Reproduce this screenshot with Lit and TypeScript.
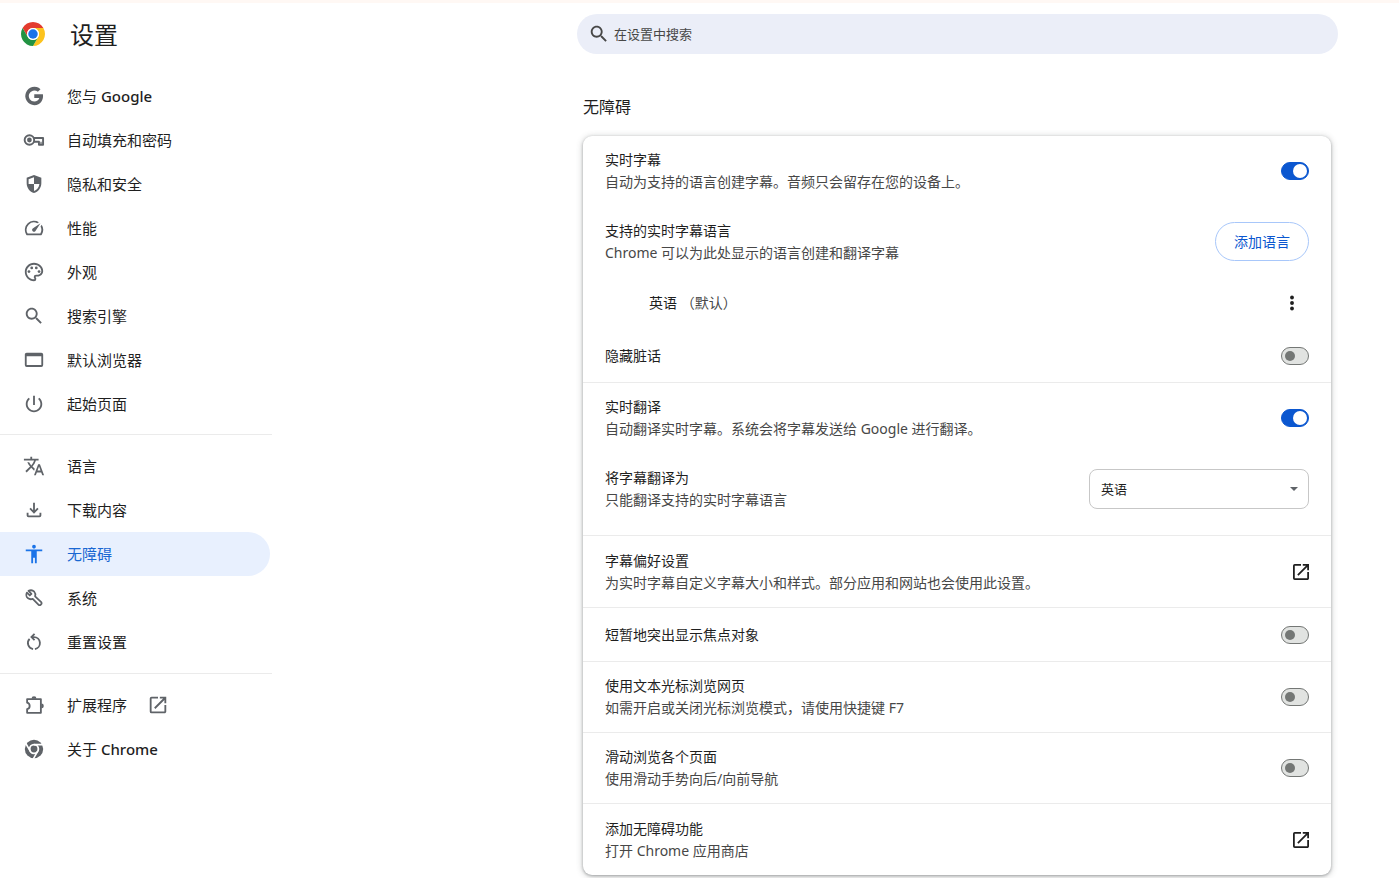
import { LitElement, html, css, svg, nothing } from "lit";
import type { TemplateResult } from "lit";
import { customElement, property, state } from "lit/decorators.js";
import { classMap } from "lit/directives/class-map.js";

const icon = (body: TemplateResult, viewBox = "0 0 24 24") =>
  html`<svg class="icon" viewBox=${viewBox} aria-hidden="true">${body}</svg>`;

const openPath = svg`<path d="M19 19H5V5h7V3H5a2 2 0 0 0-2 2v14a2 2 0 0 0 2 2h14c1.1 0 2-.9 2-2v-7h-2v7zM14 3v2h3.59l-9.83 9.83 1.41 1.41L19 6.41V10h2V3h-7z"/>`;
const searchPath = svg`<path d="M15.5 14h-.79l-.28-.27C15.41 12.59 16 11.11 16 9.5 16 5.91 13.09 3 9.5 3S3 5.91 3 9.5 5.91 16 9.5 16c1.61 0 3.09-.59 4.23-1.57l.27.28v.79l5 4.99L20.49 19l-4.99-5zm-6 0C7.01 14 5 11.99 5 9.5S7.01 5 9.5 5 14 7.01 14 9.5 11.99 14 9.5 14z"/>`;

const icons: Record<string, TemplateResult> = {
  google: icon(svg`<path d="M12.3 10.2v3.9h5.5c-.7 2.3-2.7 3.9-5.5 3.9a6 6 0 1 1 3.9-10.600l2.900-2.900A10 10 0 1 0 12.300 22c8.400 0 10.200-7.800 9.400-11.800z"/>`),
  key: icon(svg`<circle cx="7" cy="12" r="5.200" fill="none" stroke="currentColor" stroke-width="2.100"/><circle cx="7" cy="12" r="2.600"/><path d="M11.600 9.900H21.900V17.100H17.400V13.900H12" fill="none" stroke="currentColor" stroke-width="2.100" stroke-linejoin="round"/><path d="M19 14h1.300v2.500H19z"/>`),
  shield: icon(svg`<path d="M12 2.300L4 5.300v5.900c0 4.900 3.410 9.500 8 10.600 4.590-1.100 8-5.700 8-10.600V5.300zM12 12h5.900c-.5 3.700-2.800 6.700-5.900 7.700V12H6.100V6.800L12 4.500z"/>`),
  speed: icon(svg`<path d="M20.380 8.570l-1.230 1.850a8 8 0 0 1-.22 7.580H5.070A8 8 0 0 1 15.580 6.850l1.850-1.230A10 10 0 0 0 3.350 19a2 2 0 0 0 1.720 1h13.850a2 2 0 0 0 1.740-1 10 10 0 0 0-.27-10.440zm-9.790 6.840a2 2 0 0 0 2.830 0l5.660-8.490-8.490 5.660a2 2 0 0 0 0 2.830z"/>`),
  palette: icon(svg`<path d="M12 22C6.490 22 2 17.510 2 12S6.490 2 12 2s10 4.040 10 9c0 3.310-2.690 6-6 6h-1.770c-.28 0-.5.22-.5.5 0 .12.05.23.13.33.41.47.64 1.060.64 1.670A2.500 2.500 0 0 1 12 22zm0-18c-4.410 0-8 3.590-8 8s3.590 8 8 8c.28 0 .5-.22.5-.5a.54.54 0 0 0-.14-.35c-.41-.46-.63-1.050-.63-1.650a2.500 2.500 0 0 1 2.500-2.500H16c2.210 0 4-1.790 4-4 0-3.860-3.590-7-8-7z"/><circle cx="6.500" cy="11.500" r="1.500"/><circle cx="9.500" cy="7.500" r="1.500"/><circle cx="14.500" cy="7.500" r="1.500"/><circle cx="17.500" cy="11.500" r="1.500"/>`),
  search: icon(searchPath),
  browser: icon(svg`<path fill-rule="evenodd" d="M4 4h16a2 2 0 0 1 2 2v11.500a2 2 0 0 1-2 2H4a2 2 0 0 1-2-2V6c0-1.100.9-2 2-2zm0 3.800v9.700h16V7.800H4z"/>`),
  power: icon(svg`<path d="M13 3h-2v10h2V3zm4.830 2.170l-1.420 1.420C17.990 7.860 19 9.810 19 12c0 3.870-3.130 7-7 7s-7-3.130-7-7c0-2.190 1.010-4.140 2.580-5.420L6.170 5.170C4.230 6.820 3 9.260 3 12c0 4.970 4.030 9 9 9s9-4.030 9-9c0-2.740-1.230-5.180-3.170-6.830z"/>`),
  language: icon(svg`<path d="M12.870 15.070l-2.540-2.510.03-.03c1.740-1.940 2.980-4.170 3.710-6.530H17V4h-7V2H8v2H1v1.990h11.170C11.500 7.920 10.440 9.750 9 11.350 8.070 10.320 7.300 9.190 6.690 8h-2c.73 1.630 1.730 3.170 2.980 4.560l-5.090 5.020L4 19l5-5 3.110 3.110.76-2.040zM18.500 10h-2L12 22h2l1.120-3h4.750L21 22h2l-4.500-12zm-2.620 7l1.620-4.330L19.120 17h-3.240z"/>`),
  download: icon(svg`<path d="M12 16l-5-5 1.400-1.450 2.600 2.600V4h2v8.150l2.600-2.600L17 11l-5 5zM6 20a2 2 0 0 1-2-2v-3h2v3h12v-3h2v3a2 2 0 0 1-2 2H6z"/>`),
  accessibility: icon(svg`<path d="M12 2c1.100 0 2 .9 2 2s-.9 2-2 2-2-.9-2-2 .9-2 2-2zm9 7h-6v13h-2v-6h-2v6H9V9H3V7h18v2z"/>`),
  wrench: icon(svg`<path d="M5.500 3.600L9 7 7 9 3.600 5.600C2.300 8 3 11 5 12.400c1.700 1.200 3.700 1.300 5.500.6l7 7a1.600 1.600 0 0 0 2.300 0l.7-.7a1.600 1.600 0 0 0 0-2.300L13.300 10c.7-2 .3-4-1-5.400-1.800-1.800-4.500-2.100-6.800-1z" fill="none" stroke="currentColor" stroke-width="2.100" stroke-linejoin="round"/>`, "-1 -1 26 26"),
  reset: icon(svg`<path d="M9.700 6.600H12A6.600 6.600 0 0 1 13 19.700M11 19.700A6.600 6.600 0 0 1 7.200 8.600" fill="none" stroke="currentColor" stroke-width="2"/><path d="M12.600 3.200L9.200 6.600l3.400 3.400" fill="none" stroke="currentColor" stroke-width="2"/>`),
  extension: icon(svg`<path d="M4.500 5.500H19.500V20.500H4.500V16.500C8.200 15.500 8.200 10.500 4.500 9.500Z" fill="none" stroke="currentColor" stroke-width="2" stroke-linejoin="round"/><path d="M9.300 5.200a2.700 2.700 0 0 1 5.400 0zM20 10.300a2.700 2.700 0 0 1 0 5.400z"/>`),
  chrome: icon(svg`<circle cx="24" cy="24" r="20"/><circle cx="24" cy="24" r="9.500" fill="none" stroke="#fff" stroke-width="4"/><path d="M24 14.500H44M15.800 28.700L5.800 11.500M32.200 28.700L22.200 46" stroke="#fff" stroke-width="3.500" fill="none"/>`, "0 0 48 48"),
};

interface Entry { id: string; label: string; latin?: string; external?: boolean; }

const groups: Entry[][] = [
  [
    { id: "google", label: "您与 ", latin: "Google" },
    { id: "key", label: "自动填充和密码" },
    { id: "shield", label: "隐私和安全" },
    { id: "speed", label: "性能" },
    { id: "palette", label: "外观" },
    { id: "search", label: "搜索引擎" },
    { id: "browser", label: "默认浏览器" },
    { id: "power", label: "起始页面" },
  ],
  [
    { id: "language", label: "语言" },
    { id: "download", label: "下载内容" },
    { id: "accessibility", label: "无障碍" },
    { id: "wrench", label: "系统" },
    { id: "reset", label: "重置设置" },
  ],
  [
    { id: "extension", label: "扩展程序", external: true },
    { id: "chrome", label: "关于 ", latin: "Chrome" },
  ],
];

@customElement("settings-menu")
export class SettingsMenu extends LitElement {
  static styles = css`
    :host { display: block; }
    .group { display: flex; flex-direction: column; }
    .group + .group { border-top: 1px solid #ebebeb; margin-top: 8px; padding: 9px 0 1px; }
    .item {
      display: flex; align-items: center; gap: 22px; height: 44px; margin-right: 2px;
      padding-left: 23px; border-radius: 0 22px 22px 0; box-sizing: border-box;
      color: #1f1f1f; text-decoration: none; font-size: 15px;
    }
    .icon { width: 22px; height: 22px; flex: none; fill: currentColor; color: #5f6368; }
    .selected { background: #e8f0fe; color: #1967d2; }
    .selected .icon { color: #1a73e8; }
    .text { white-space: nowrap; }
    .latin { font-weight: 500; }
    .external { display: flex; margin-left: -2px; }
  `;
  @property() selected = "accessibility";

  render() {
    return html`<nav aria-label="设置">
      ${groups.map((group) => html`<div class="group">
        ${group.map((e) => html`<a href="#${e.id}"
          class=${classMap({ item: true, selected: e.id === this.selected })}
          @click=${() => { this.selected = e.id; }}>
          ${icons[e.id]}<span class="text">${e.label}${e.latin ? html`<span class="latin">${e.latin}</span>` : nothing}</span>
          ${e.external ? html`<span class="external">${icon(openPath)}</span>` : nothing}
        </a>`)}
      </div>`)}
    </nav>`;
  }
}

@customElement("app-root")
export class AppRoot extends LitElement {
  static styles = css`
    :host {
      display: block; min-height: 100vh; box-sizing: border-box; background: #fff;
      border-top: 3px solid #fff8f4; color: #1f1f1f;
      font-family: "Noto Sans", "Noto Sans CJK SC", sans-serif; font-size: 14px; line-height: 22px;
    }
    .layout { display: grid; grid-template-columns: 272px minmax(0, 1fr); }
    .brand { display: flex; align-items: center; gap: 25px; height: 62px; padding-left: 21px; }
    .logo { width: 24px; height: 24px; }
    .app-name { margin: 0; font-size: 24px; font-weight: 400; line-height: 32px; padding-top: 2px; }
    .menu { margin-top: 9px; }
    .content { width: 100%; max-width: 748px; box-sizing: content-box; justify-self: end; }
    .main { display: grid; padding: 11px 68px 3px 20px; }
    .search {
      display: flex; align-items: center; gap: 4px; height: 40px; margin: 0 -7px 0 -6px;
      padding-left: 11px; border-radius: 20px; background: #ebeef8; color: #474747;
    }
    .search .icon { width: 22px; height: 22px; fill: currentColor; }
    .search-input {
      flex: 1; min-width: 0; border: 0; outline: 0; background: none; padding: 0 16px 0 0;
      font: inherit; font-size: 13px; color: #1f1f1f;
    }
    .search-input::placeholder { color: #474747; opacity: 1; }
    .heading { margin: 42px 0 17px; font-size: 16px; font-weight: 400; line-height: 23px; }
    .card { border-radius: 9px; background: #fff; box-shadow: 0 1px 3px rgba(60, 64, 67, .4), 0 1px 6px 1px rgba(60, 64, 67, .2); }
    .row { display: flex; align-items: center; gap: 22px; min-height: 71px; padding: 0 22px; box-sizing: border-box; }
    .first { min-height: 70px; }
    .short { min-height: 53px; }
    .line { border-top: 1px solid #ebebeb; }
    .short.line { min-height: 54px; }
    .tall { min-height: 72px; }
    .roomy { padding-bottom: 11px; min-height: 82px; }
    .indent { padding-left: 66px; min-height: 52px; }
    .copy { display: flex; flex-direction: column; flex: 1; min-width: 0; }
    .detail { color: #474747; }
    .toggle {
      appearance: none; flex: none; display: flex; align-items: center; width: 28px; height: 18px; margin: 0;
      padding: 0 3px; box-sizing: border-box; border: 1px solid #747775; border-radius: 9px; background: #e1e3e1;
    }
    .toggle::before { content: ""; width: 10px; height: 10px; border-radius: 50%; background: #747775; }
    .toggle:checked { justify-content: flex-end; padding: 0 1px; border-color: #0b57d0; background: #0b57d0; }
    .toggle:checked::before { width: 14px; height: 14px; background: #fff; }
    .add {
      height: 39px; padding: 0 18px; border: 1px solid #a8c7fa; border-radius: 20px;
      background: #fff; color: #0b57d0; font: inherit; white-space: nowrap;
    }
    .more, .open { display: flex; align-items: center; justify-content: center; padding: 0; border: 0; background: none; color: #1f1f1f; }
    .more { width: 34px; height: 34px; }
    .more .icon { width: 22px; height: 22px; fill: currentColor; }
    .open .icon { width: 16px; height: 16px; fill: currentColor; }
    .picker { display: grid; align-items: center; flex: 0 1 220px; }
    .select {
      grid-area: 1 / 1; appearance: none; width: 100%; height: 40px; padding: 0 30px 0 11px; border: 1px solid #c7c7c7;
      border-radius: 8px; background: #fff; color: #1f1f1f; font: inherit; font-size: 13px;
    }
    .picker .icon {
      grid-area: 1 / 1; justify-self: end; width: 8px; height: 4px; margin-right: 11px;
      fill: #5f6368; pointer-events: none;
    }
  `;

  @state() private on: Record<string, boolean> = { caption: true, translate: true };

  private copy(id: string, title: string, detail?: string) {
    return html`<label class="copy" for=${id}>
      <span>${title}</span>${detail ? html`<span class="detail">${detail}</span>` : nothing}
    </label>`;
  }

  private toggleRow(id: string, style: string, title: string, detail?: string) {
    return html`<div class="row ${style}">
      ${this.copy(id, title, detail)}
      <input class="toggle" type="checkbox" role="switch" id=${id} .checked=${!!this.on[id]}
        @change=${(e: Event) => { this.on = { ...this.on, [id]: (e.target as HTMLInputElement).checked }; }}>
    </div>`;
  }

  private linkRow(id: string, style: string, title: string, detail: string) {
    return html`<div class="row ${style}">
      ${this.copy(id, title, detail)}
      <button class="open" id=${id} type="button">${icon(openPath, "3 3 18 18")}</button>
    </div>`;
  }

  render() {
    return html`<div class="layout">
      <aside>
        <div class="brand">
          <svg class="logo" viewBox="0 0 48 48" aria-hidden="true">
            <path fill="#e33b2e" d="M24 12h20.780A24 24 0 0 0 3.220 12l10.390 18A12 12 0 0 1 24 12z"/>
            <path fill="#fcc31e" d="M34.390 30L24 48A24 24 0 0 0 44.780 12H24A12 12 0 0 1 34.390 30z"/>
            <path fill="#229342" d="M13.610 30L3.220 12A24 24 0 0 0 24 48l10.390-18A12 12 0 0 1 13.610 30z"/>
            <circle cx="24" cy="24" r="12" fill="#fff"/>
            <circle cx="24" cy="24" r="9.500" fill="#1a73e8"/>
          </svg>
          <h1 class="app-name">设置</h1>
        </div>
        <settings-menu class="menu"></settings-menu>
      </aside>
      <main class="main">
        <div class="content">
          <div class="search">
            ${icon(searchPath)}
            <input class="search-input" type="search" aria-label="在设置中搜索" placeholder="在设置中搜索">
          </div>
          <h2 class="heading">无障碍</h2>
          <section class="card">
            ${this.toggleRow("caption", "first", "实时字幕", "自动为支持的语言创建字幕。音频只会留存在您的设备上。")}
            <div class="row">
              ${this.copy("add", "支持的实时字幕语言", "Chrome 可以为此处显示的语言创建和翻译字幕")}
              <button class="add" id="add" type="button">添加语言</button>
            </div>
            <div class="row indent">
              <div class="copy"><span>英语 <span class="detail">（默认）</span></span></div>
              <button class="more" type="button" aria-label="更多操作">
                ${icon(svg`<circle cx="12" cy="6" r="2.100"/><circle cx="12" cy="12" r="2.100"/><circle cx="12" cy="18" r="2.100"/>`)}
              </button>
            </div>
            ${this.toggleRow("profanity", "short", "隐藏脏话")}
            ${this.toggleRow("translate", "line", "实时翻译", "自动翻译实时字幕。系统会将字幕发送给 Google 进行翻译。")}
            <div class="row roomy">
              ${this.copy("target", "将字幕翻译为", "只能翻译支持的实时字幕语言")}
              <div class="picker">
                <select class="select" id="target"><option>英语</option></select>
                ${icon(svg`<path d="M0 0h10L5 5z"/>`, "0 0 10 5")}
              </div>
            </div>
            ${this.linkRow("prefs", "line tall", "字幕偏好设置", "为实时字幕自定义字幕大小和样式。部分应用和网站也会使用此设置。")}
            ${this.toggleRow("focus", "line short", "短暂地突出显示焦点对象")}
            ${this.toggleRow("caret", "line", "使用文本光标浏览网页", "如需开启或关闭光标浏览模式，请使用快捷键 F7")}
            ${this.toggleRow("swipe", "line", "滑动浏览各个页面", "使用滑动手势向后/向前导航")}
            ${this.linkRow("store", "line tall", "添加无障碍功能", "打开 Chrome 应用商店")}
          </section>
        </div>
      </main>
    </div>`;
  }
}
